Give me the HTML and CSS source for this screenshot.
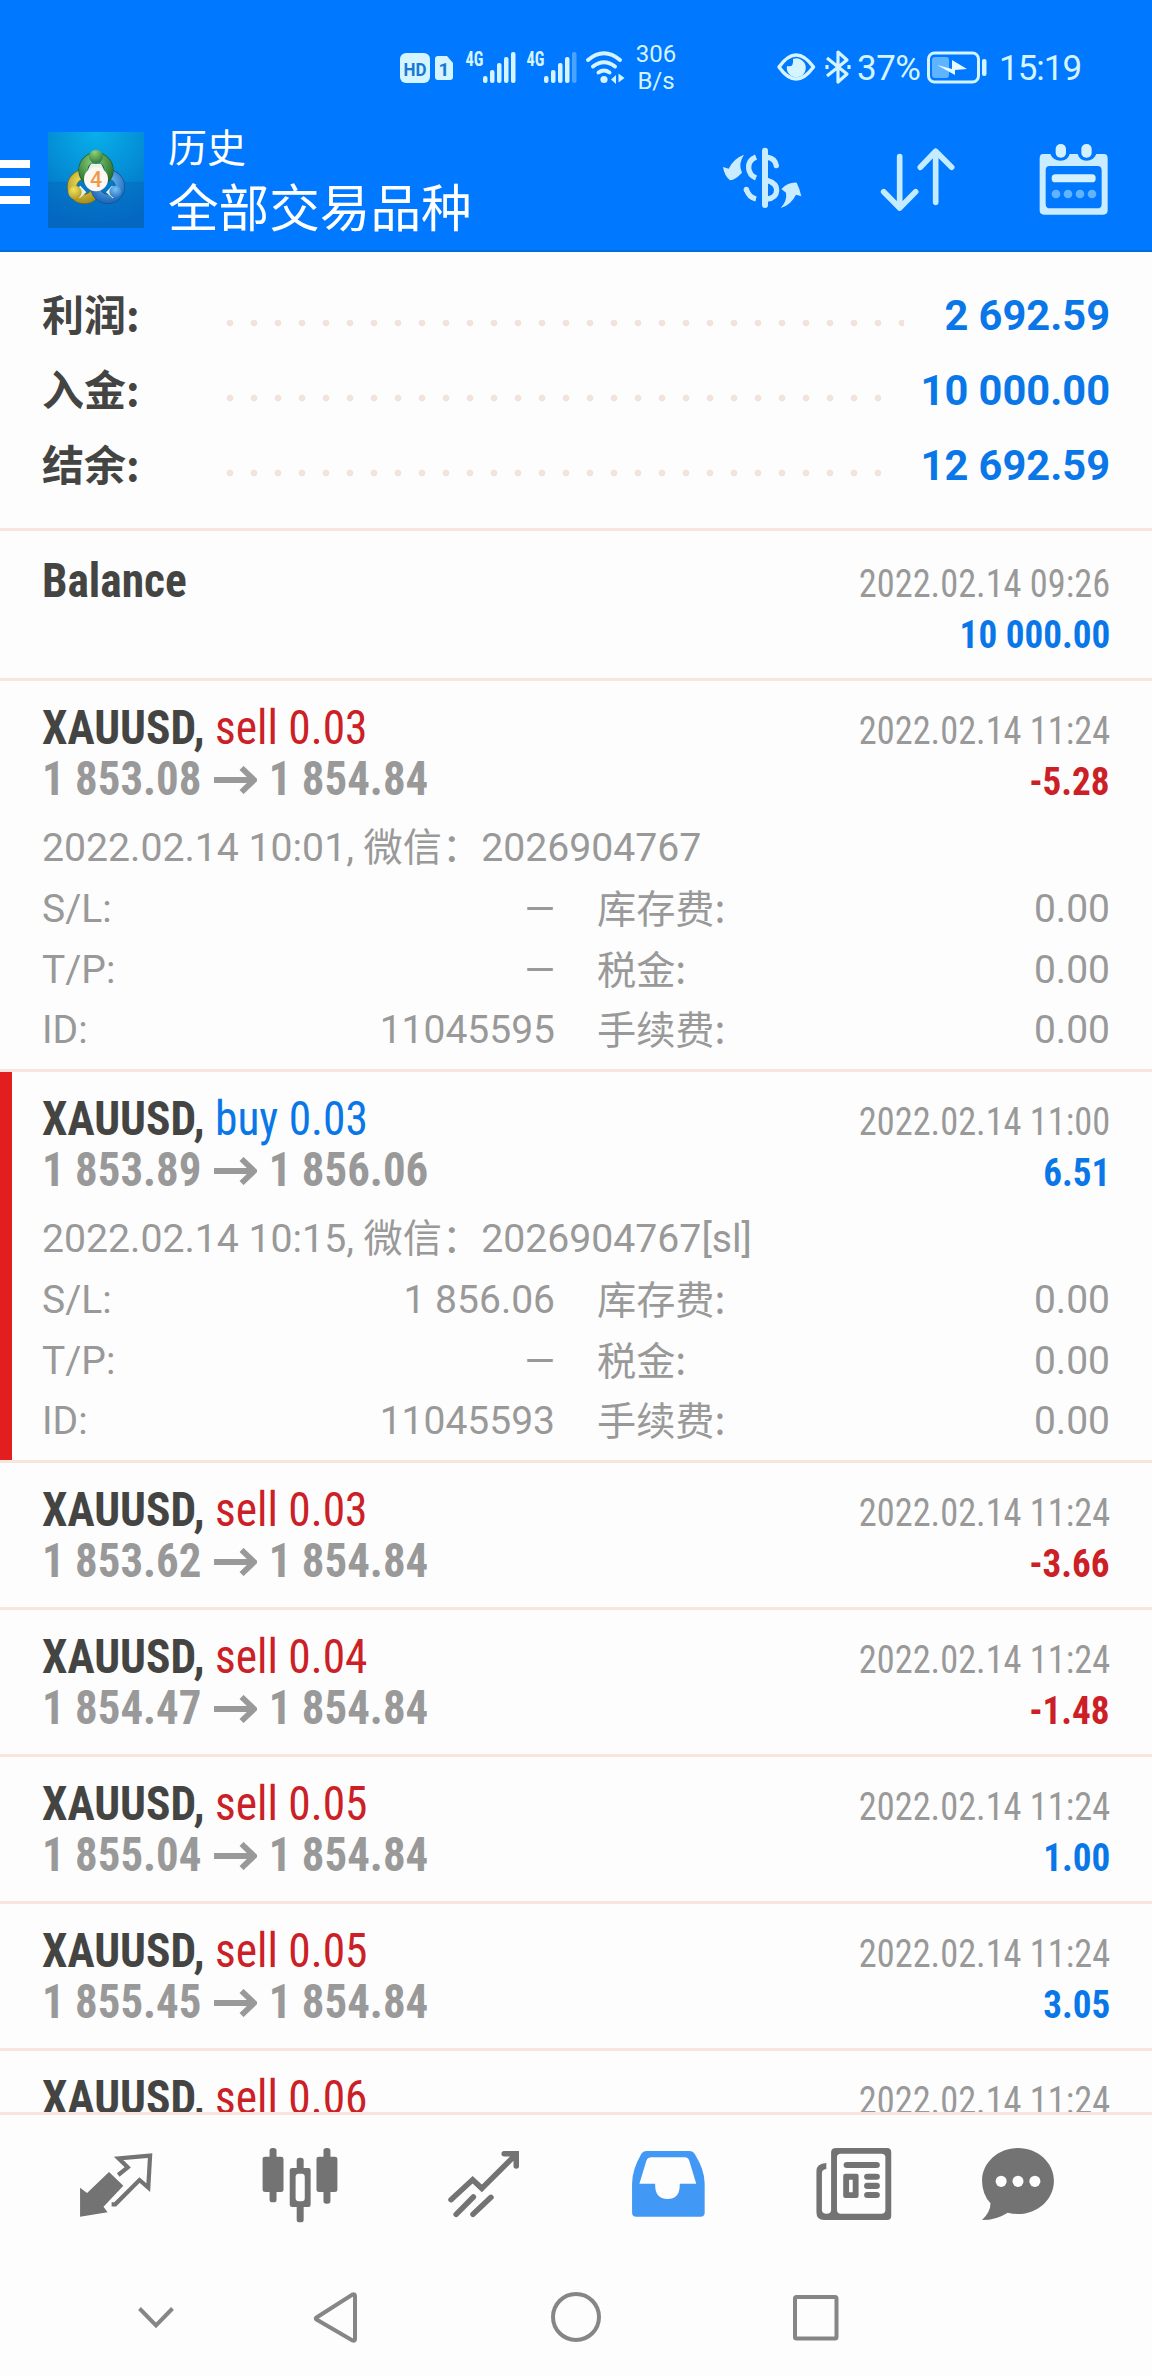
FILE: index.html
```html
<!DOCTYPE html>
<html lang="zh-CN">
<head>
<meta charset="utf-8">
<title>历史</title>
<link rel="stylesheet" href="styles.css">
</head>
<body>
<svg class="defs" width="0" height="0">
  <symbol id="arrow" viewBox="0 0 43 28" preserveAspectRatio="none">
    <path d="M0 14H40M27.500 2L40 14L27.500 26" fill="none" stroke="currentColor" stroke-width="5.800"/>
  </symbol>
</svg>
<div class="screen">
  <header class="header">
    <div class="status">
      <svg class="status-left" width="226" height="50" viewBox="399 42 226 50">
        <g fill="#d4f4ff">
          <rect x="400" y="53" width="30" height="30" rx="6"/>
          <path d="M438 56h9l6 7v14a3 3 0 0 1-3 3h-12a3 3 0 0 1-3-3v-18a3 3 0 0 1 3-3z"/>
          <g id="bars">
            <rect x="483" y="76" width="4.500" height="7" rx="2"/>
            <rect x="490" y="70" width="4.500" height="13" rx="2"/>
            <rect x="497" y="63" width="4.500" height="20" rx="2"/>
            <rect x="504" y="57" width="4.500" height="26" rx="2"/>
          </g>
          <rect x="511" y="52" width="4.500" height="31" rx="2"/>
          <use href="#bars" x="61"/>
          <rect x="572" y="52" width="4.500" height="31" rx="2" opacity=".35"/>
          <circle cx="604" cy="79.500" r="3.600"/>
          <path d="M616 75v9l-5-4.500zM618.500 73.500v9l6-4.500z"/>
        </g>
        <g fill="none" stroke="#d4f4ff" stroke-width="4" stroke-linecap="round">
          <path d="M588 60Q604 46.500 620 60M593 66.500Q604 58 615 66.500M598.500 72.500Q604 68.500 609.500 72.500"/>
        </g>
        <text x="403.500" y="75.500" class="badge" textLength="23" lengthAdjust="spacingAndGlyphs">HD</text>
        <text x="438.500" y="76" class="badge">1</text>
        <text x="465.500" y="65.500" class="net" textLength="18" lengthAdjust="spacingAndGlyphs">4G</text>
        <text x="526.500" y="65.500" class="net" textLength="18" lengthAdjust="spacingAndGlyphs">4G</text>
      </svg>
      <div class="speed">306<br>B/s</div>
      <svg class="status-eye" width="76" height="40" viewBox="776 48 76 40">
        <path d="M779 67Q796 43 813.500 67Q796 91 779 67z" fill="none" stroke="#d4f4ff" stroke-width="3.500" stroke-linejoin="round"/>
        <path d="M793 59A9.500 9.500 0 1 1 787 66Q794 68 793 59z" fill="#d4f4ff"/>
        <path d="M827 58L847 74L838 82V52L847 60L827 76M827 65v4M849 65v4" fill="none" stroke="#d4f4ff" stroke-width="3.200" stroke-linejoin="round"/>
      </svg>
      <div class="percent">37%</div>
      <svg class="battery" width="60" height="36" viewBox="928 50 60 36">
        <rect x="929.500" y="53" width="50" height="29" rx="6" fill="none" stroke="#d4f4ff" stroke-width="3"/>
        <rect x="933" y="57" width="17" height="21" rx="3" fill="#5fb4ff"/>
        <path d="M938 65L953 69V60L968 69L956 70V75z" fill="#e8fbff"/>
        <rect x="983" y="59" width="4.500" height="17" rx="2" fill="#d4f4ff"/>
      </svg>
      <div class="clock">15:19</div>
    </div>
    <div class="titlebar">
      <div class="menu"><i></i><i></i><i></i></div>
      <svg class="logo" width="96" height="96" viewBox="145 66 288 288">
        <defs>
          <radialGradient id="sky" cx=".5" cy="0" r="1"><stop offset="0" stop-color="#08b0ea"/><stop offset=".45" stop-color="#0592d8"/><stop offset="1" stop-color="#0468c4"/></radialGradient>
          <radialGradient id="green" cx=".4" cy=".2" r=".9"><stop offset="0" stop-color="#8ed07c"/><stop offset="1" stop-color="#26702c"/></radialGradient>
          <radialGradient id="gold" cx=".4" cy=".3" r=".9"><stop offset="0" stop-color="#f4e45c"/><stop offset="1" stop-color="#a48c1c"/></radialGradient>
          <radialGradient id="blue" cx=".5" cy=".3" r=".9"><stop offset="0" stop-color="#78c4fa"/><stop offset="1" stop-color="#1762b4"/></radialGradient>
        </defs>
        <rect x="145" y="66" width="288" height="288" fill="url(#sky)"/>
        <path d="M145 215H433V354H145z" fill="#0567bd" opacity=".45"/>
        <circle cx="254" cy="230" r="37" fill="none" stroke="#786916" stroke-width="30"/>
        <circle cx="254" cy="230" r="37" fill="none" stroke="url(#gold)" stroke-width="26"/>
        <circle cx="324" cy="230" r="37" fill="none" stroke="#174f96" stroke-width="30"/>
        <circle cx="324" cy="230" r="37" fill="none" stroke="url(#blue)" stroke-width="26"/>
        <circle cx="289" cy="180" r="38" fill="none" stroke="#1b5a30" stroke-width="30"/>
        <circle cx="289" cy="180" r="38" fill="none" stroke="url(#green)" stroke-width="26"/>
        <path d="M274 161h30l9 18h-48zM222 245l20-18 18 20-20 18zM357 245l-20-18-18 20 20 18z" fill="#e8f2dc"/>
        <circle cx="289" cy="140" r="21" fill="url(#green)"/>
        <circle cx="226" cy="247" r="20" fill="url(#gold)"/>
        <circle cx="347" cy="245" r="18" fill="url(#blue)"/>
        <circle cx="289" cy="208" r="36" fill="#fdf8f6"/>
        <text x="289" y="231" text-anchor="middle" class="logo-num">4</text>
      </svg>
      <div class="titles">
        <div class="title-small">历史</div>
        <div class="title-large">全部交易品种</div>
      </div>
      <svg class="act act-money" width="80" height="64" viewBox="66 78 240 192">
        <g fill="#c9ecff">
          <path d="M132 104Q113 132 126 158Q107 179 90 181Q73 167 69 141L86 146Q101 115 132 104z"/>
          <path d="M242 264Q262 242 258 218L244 207Q266 186 290 188Q299 205 304 229L288 224Q273 255 242 264z"/>
          <rect x="186" y="83" width="18" height="181" rx="9"/>
        </g>
        <g fill="none" stroke="#c9ecff" stroke-width="16">
          <path d="M168 111Q144 121 146 145Q148 166 168 174"/>
          <path d="M139 208Q146 232 168 237"/>
          <path d="M139 209v-1M204 112Q225 115 229 137" stroke-linecap="round"/>
          <path d="M201 181Q231 190 230 211Q229 234 201 237"/>
        </g>
      </svg>
      <svg class="act act-sort" width="76" height="68" viewBox="541 78 228 204">
        <path d="M600 110V264M552 215L600 264L648 215M708 247V94M662 142L708 94L756 142" fill="none" stroke="#c4ebff" stroke-width="17" stroke-linecap="round" stroke-linejoin="round"/>
      </svg>
      <svg class="act act-cal" width="70" height="74" viewBox="1018 68 210 222">
        <path d="M1030 101H1052Q1060 121 1083 121Q1104 121 1110 101H1134Q1140 121 1160 121Q1182 121 1190 101H1213Q1224 101 1224 114V270Q1224 283 1211 283H1033Q1020 283 1020 270V114Q1020 101 1030 101zM1050 137Q1038 137 1038 150V250Q1038 264 1051 264H1193Q1206 264 1206 250V150Q1206 137 1193 137z" fill="#c9ecff" fill-rule="evenodd"/>
        <rect x="1068" y="71" width="31" height="41" rx="15" fill="#d4f1ff"/>
        <rect x="1145" y="71" width="31" height="41" rx="15" fill="#d4f1ff"/>
        <rect x="1056" y="162" width="132" height="24" rx="11" fill="#d4f1ff"/>
        <g fill="#62b4ff"><circle cx="1069" cy="221" r="13"/><circle cx="1105" cy="221" r="13"/><circle cx="1141" cy="221" r="13"/><circle cx="1177" cy="221" r="13"/></g>
      </svg>
    </div>
  </header>

  <main class="content">
    <section class="summary">
      <div class="sum-row"><span class="sum-label">利润:</span><span class="dots"></span><span class="sum-value">2 692.59</span></div>
      <div class="sum-row"><span class="sum-label">入金:</span><span class="dots"></span><span class="sum-value">10 000.00</span></div>
      <div class="sum-row"><span class="sum-label">结余:</span><span class="dots"></span><span class="sum-value">12 692.59</span></div>
    </section>

    <article class="deal deal-balance">
      <div class="line"><span class="name"><b>Balance</b></span><span class="date">2022.02.14 09:26</span></div>
      <div class="line"><span></span><span class="profit up">10 000.00</span></div>
    </article>

    <article class="deal deal-open">
      <div class="line"><span class="name"><b>XAUUSD,</b> <span class="down">sell 0.03</span></span><span class="date">2022.02.14 11:24</span></div>
      <div class="line"><span class="price">1 853.08<svg class="to"><use href="#arrow"/></svg>1 854.84</span><span class="profit down">-5.28</span></div>
      <div class="comment">2022.02.14 10:01, 微信：2026904767</div>
      <dl class="details">
        <dt>S/L:</dt><dd>—</dd><dt class="cn">库存费:</dt><dd>0.00</dd>
        <dt>T/P:</dt><dd>—</dd><dt class="cn">税金:</dt><dd>0.00</dd>
        <dt>ID:</dt><dd>11045595</dd><dt class="cn">手续费:</dt><dd>0.00</dd>
      </dl>
    </article>

    <article class="deal deal-open stopped">
      <div class="line"><span class="name"><b>XAUUSD,</b> <span class="up">buy 0.03</span></span><span class="date">2022.02.14 11:00</span></div>
      <div class="line"><span class="price">1 853.89<svg class="to"><use href="#arrow"/></svg>1 856.06</span><span class="profit up">6.51</span></div>
      <div class="comment">2022.02.14 10:15, 微信：2026904767[sl]</div>
      <dl class="details">
        <dt>S/L:</dt><dd>1 856.06</dd><dt class="cn">库存费:</dt><dd>0.00</dd>
        <dt>T/P:</dt><dd>—</dd><dt class="cn">税金:</dt><dd>0.00</dd>
        <dt>ID:</dt><dd>11045593</dd><dt class="cn">手续费:</dt><dd>0.00</dd>
      </dl>
    </article>

    <article class="deal">
      <div class="line"><span class="name"><b>XAUUSD,</b> <span class="down">sell 0.03</span></span><span class="date">2022.02.14 11:24</span></div>
      <div class="line"><span class="price">1 853.62<svg class="to"><use href="#arrow"/></svg>1 854.84</span><span class="profit down">-3.66</span></div>
    </article>
    <article class="deal">
      <div class="line"><span class="name"><b>XAUUSD,</b> <span class="down">sell 0.04</span></span><span class="date">2022.02.14 11:24</span></div>
      <div class="line"><span class="price">1 854.47<svg class="to"><use href="#arrow"/></svg>1 854.84</span><span class="profit down">-1.48</span></div>
    </article>
    <article class="deal">
      <div class="line"><span class="name"><b>XAUUSD,</b> <span class="down">sell 0.05</span></span><span class="date">2022.02.14 11:24</span></div>
      <div class="line"><span class="price">1 855.04<svg class="to"><use href="#arrow"/></svg>1 854.84</span><span class="profit up">1.00</span></div>
    </article>
    <article class="deal">
      <div class="line"><span class="name"><b>XAUUSD,</b> <span class="down">sell 0.05</span></span><span class="date">2022.02.14 11:24</span></div>
      <div class="line"><span class="price">1 855.45<svg class="to"><use href="#arrow"/></svg>1 854.84</span><span class="profit up">3.05</span></div>
    </article>
    <article class="deal">
      <div class="line"><span class="name"><b>XAUUSD,</b> <span class="down">sell 0.06</span></span><span class="date">2022.02.14 11:24</span></div>
    </article>
  </main>

  <nav class="tabs">
    <svg viewBox="196 315 240 240" preserveAspectRatio="none">
      <path d="M218 443L237 459L297 396L336 437L282 500L293 517L218 530z" fill="#737373"/>
      <path d="M322 405L348 382L323 355L409 347L404 443L380 420L314 493H304" fill="none" stroke="#737373" stroke-width="4.200" vector-effect="non-scaling-stroke"/>
    </svg>
    <svg viewBox="695 315 240 240" preserveAspectRatio="none">
      <g fill="#737373">
        <rect x="732" y="324" width="19" height="163" rx="8"/><rect x="713" y="350" width="57" height="106" rx="7"/>
        <rect x="879" y="324" width="19" height="167" rx="8"/><rect x="860" y="350" width="57" height="106" rx="7"/>
        <rect x="806" y="353" width="19" height="40" rx="8"/><rect x="806" y="490" width="19" height="57" rx="8"/>
        <path d="M794 384H838Q844 384 844 390V494Q844 501 838 501H794Q787 501 787 494V390Q787 384 794 384zM812 401Q803 401 803 411V474Q803 484 812 484H820Q828 484 828 474V411Q828 401 820 401z" fill-rule="evenodd"/>
      </g>
    </svg>
    <svg viewBox="1197 315 240 240" preserveAspectRatio="none">
      <g fill="none" stroke="#737373" stroke-width="5.500" stroke-linecap="round">
        <path vector-effect="non-scaling-stroke" d="M1227 479L1286 419L1311 445L1401 347M1372 341H1405V378"/>
        <path vector-effect="non-scaling-stroke" d="M1241 523L1288 471M1287 523L1336 472"/>
      </g>
    </svg>
    <svg viewBox="132 315 240 240" preserveAspectRatio="none">
      <path d="M194 333H310Q320 333 325 342Q352 390 352 430V518Q352 530 340 530H166Q154 530 154 518V430Q154 390 179 342Q184 333 194 333zM207 352Q197 352 193 362L174 431H217Q215 476 251 477Q286 476 284 431H329L310 362Q306 352 298 352z" fill="#4299f5" fill-rule="evenodd"/>
    </svg>
    <svg viewBox="632 315 240 240" preserveAspectRatio="none">
      <g fill="#737373">
        <path d="M709 324H847Q859 324 859 337V527Q859 540 847 540H676Q655 540 655 517V393Q655 371 682 369V387Q670 388 670 400V510Q670 521 683 521Q695 521 695 510V337Q695 324 709 324zM722 341Q711 341 711 352V510Q711 521 722 521H832Q843 521 843 510V352Q843 341 832 341z" fill-rule="evenodd"/>
        <rect x="729" y="366" width="99" height="18" rx="9"/>
        <path d="M734 401H764Q770 401 770 407V467Q770 474 764 474H734Q728 474 728 467V407Q728 401 734 401zM744 419V457H754V419z" fill-rule="evenodd"/>
        <rect x="785" y="401" width="43" height="18" rx="9"/><rect x="785" y="428" width="43" height="19" rx="9"/><rect x="785" y="456" width="43" height="18" rx="9"/>
      </g>
    </svg>
    <svg viewBox="1083 315 240 240" preserveAspectRatio="none">
      <path d="M1203 324C1257 324 1301 368 1301 422C1301 478 1257 522 1203 522Q1188 522 1175 518Q1144 540 1105 540Q1128 516 1128 490Q1105 462 1105 422C1105 368 1149 324 1203 324z" fill="#737373"/>
      <g fill="#fdfdfd"><ellipse cx="1157" cy="424" rx="15" ry="17"/><ellipse cx="1203" cy="424" rx="15" ry="17"/><ellipse cx="1249" cy="424" rx="15" ry="17"/></g>
    </svg>
  </nav>

  <nav class="sysnav">
    <svg width="60" height="60" viewBox="0 0 60 60"><path d="M13.500 21.500L30 38.500L46.500 21.500"/></svg>
    <svg width="60" height="60" viewBox="0 0 60 60"><path d="M10.500 30.500L46.500 7.500Q49 6.500 49 9V52Q49 54.500 46.500 53.500L10.500 32.500Q9 31.500 10.500 30.500z"/></svg>
    <svg width="60" height="60" viewBox="0 0 60 60"><circle cx="30" cy="30" r="23"/></svg>
    <svg width="60" height="60" viewBox="0 0 60 60"><rect x="9" y="10" width="41.500" height="41.500" rx="1.500"/></svg>
  </nav>
</div>
</body>
</html>
```
FILE: styles.css
```css
* { box-sizing: border-box; }
body {
  margin: 0;
  background: #fdfdfd;
  color: #444543;
  font-family: Roboto, "Noto Sans CJK SC", sans-serif;
}
svg { display: block; flex: none; }
.defs { position: absolute; }
.screen {
  width: 1152px;
  height: 2376px;
  display: flex;
  flex-direction: column;
  overflow: hidden;
}

/* Header */
.header {
  height: 252px;
  flex: none;
  background: #0078ff;
  border-bottom: 2px solid #006bdc;
  color: #fff;
}
.status {
  height: 130px;
  padding-top: 42px;
  display: flex;
  align-items: flex-start;
  color: #d4f4ff;
}
.status-left { margin-left: 399px; }
.speed {
  width: 62px;
  text-align: center;
  font-size: 24px;
  line-height: 27px;
  margin-top: -1px;
}
.status-eye { margin: 6px 0 0 89px; }
.percent, .clock { font-size: 35px; line-height: 50px; letter-spacing: -0.5px; }
.percent { width: 71px; padding-left: 5px; margin-right: 4px; margin-top: 2px; }
.battery { margin-top: 8px; }
.clock { margin-left: 12px; margin-top: 2px; letter-spacing: -1px; }
.badge { font-size: 19px; font-weight: 700; fill: #1677d8; }
.net { font-size: 20px; font-weight: 700; font-stretch: 75%; fill: #d4f4ff; }

.titlebar { display: flex; align-items: flex-start; }
.menu {
  width: 30px;
  margin: 30px 18px 0 0;
  display: flex;
  flex-direction: column;
  gap: 10px;
}
.menu i { height: 8px; background: #fff; }
.logo { margin-top: 2px; }
.logo-num { font-size: 64px; font-weight: 500; fill: #f09a48; }
.titles { width: 310px; margin-left: 24px; white-space: nowrap; }
.title-small { font-size: 39px; line-height: 38px; }
.title-large { font-size: 50.600px; line-height: 60px; margin-top: 12px; }
.act-money { margin: 16px 0 0 244px; }
.act-sort { margin: 16px 0 0 78px; }
.act-cal { margin: 13px 0 0 83px; }

/* Totals */
.content { height: 1860px; flex: none; overflow: hidden; }
.summary { height: 276px; padding: 29px 42px 0; }
.sum-row { height: 75px; display: flex; line-height: 70px; font-weight: 700; }
.sum-label {
  width: 184px;
  font-family: "Noto Sans CJK SC", sans-serif;
  font-size: 42px;
  line-height: 63px;
}
.dots {
  flex: 1;
  margin-right: 40px;
  background: radial-gradient(circle at 4px 42px, #f2e3dd 3px, transparent 3.800px) 0 0 / 24px 75px repeat-x;
}
.sum-value { font-size: 41.600px; color: #0a77e8; }

/* Deals */
.deal {
  height: 147px;
  padding: 21px 42px 0;
  border-top: 3px solid #f8e5db;
}
.deal-balance { height: 150px; padding-top: 24px; }
.deal-open { height: 391px; }
.stopped { box-shadow: inset 12px 0 #e21e1e; }
.line {
  height: 51px;
  display: flex;
  justify-content: space-between;
  white-space: nowrap;
  font-stretch: 75%;
}
.name, .price {
  font-size: 48px;
  line-height: 51px;
  transform: scaleX(0.946);
  transform-origin: left;
}
.price { display: flex; font-weight: 700; color: #999; transform: scaleX(0.935); }
.to { width: 46px; height: 28px; margin: 13px 13px 0; }
.date, .profit {
  font-size: 39.500px;
  line-height: 57px;
  transform-origin: right;
}
.date { color: #999; transform: scaleX(0.92); }
.profit { font-weight: 700; transform: scaleX(0.94); }
.up { color: #0a77e8; }
.down { color: #cb2026; }
.comment {
  margin-top: 14px;
  font-size: 39.200px;
  line-height: 61px;
  color: #999;
  white-space: nowrap;
}
.details {
  margin: 0;
  display: grid;
  grid-template-columns: 200px 313px 299px 1fr;
  grid-auto-rows: 60.700px;
  font-size: 39px;
  line-height: 61px;
  color: #999;
}
.details dd { margin: 0; text-align: right; }
.details .cn {
  padding-left: 42px;
  font-family: "Noto Sans CJK SC", sans-serif;
  font-size: 39.200px;
  line-height: 54px;
}

/* Bottom tabs */
.tabs {
  height: 140px;
  flex: none;
  border-top: 3px solid #f8e5db;
  padding: 30px 0 0 24px;
  display: grid;
  grid-template-columns: repeat(5, 184px) 148px;
  justify-items: center;
}
.tabs svg { width: 88px; height: 80px; }

/* System navigation */
.sysnav { display: flex; padding: 35px 0 0 126px; }
.sysnav svg { margin-right: 120px; fill: none; stroke: #868686; stroke-width: 4; }
.sysnav svg:nth-child(n+2) { margin-right: 180px; }
```
